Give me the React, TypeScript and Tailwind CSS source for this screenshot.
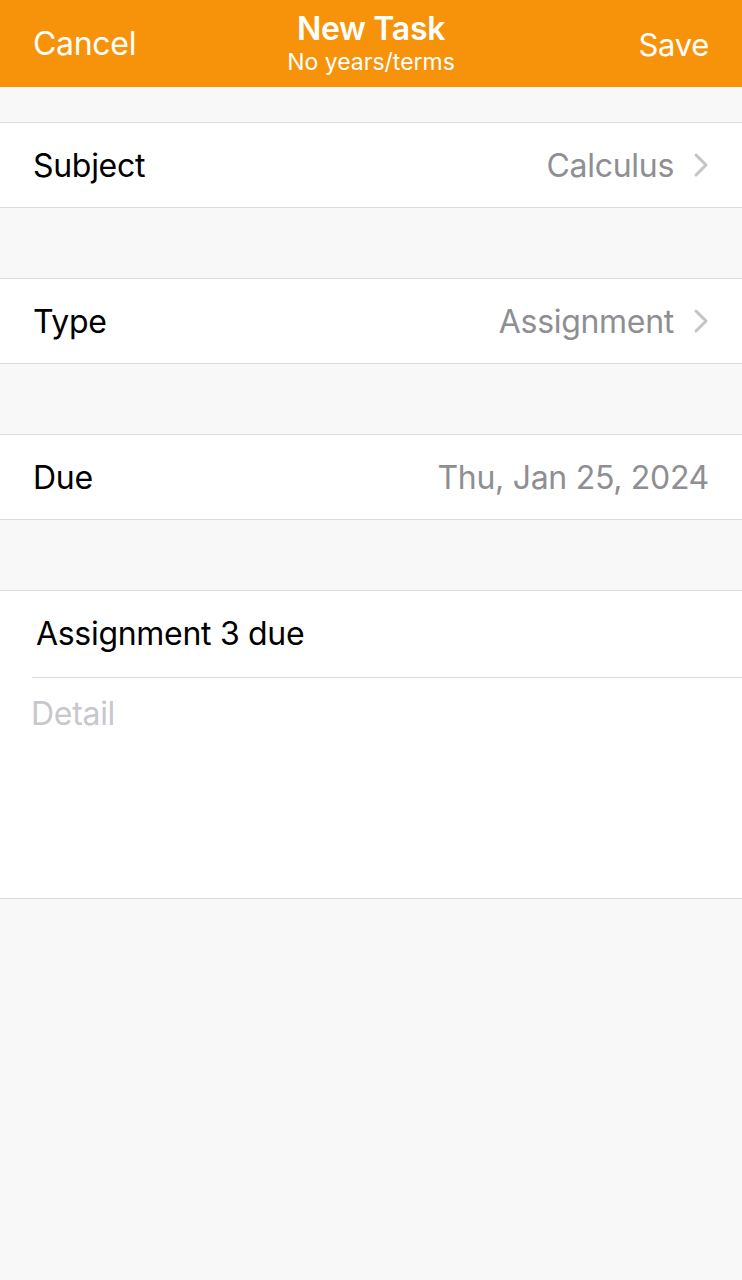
const ROWS = [
  { label: "Subject", value: "Calculus", chevron: true },
  { label: "Type", value: "Assignment", chevron: true },
  { label: "Due", value: "Thu, Jan 25, 2024", chevron: false },
];

function Chevron() {
  return (
    <svg width="16" height="26" viewBox="0 0 16 26" fill="none" className="shrink-0">
      <path d="M3 3 L13 13 L3 23" stroke="#c4c4c7" strokeWidth="3" strokeLinecap="round" strokeLinejoin="round" />
    </svg>
  );
}

export default function App() {
  return (
    <div className="min-h-[1280px] bg-[#f8f8f8] font-['Inter','Liberation_Sans',sans-serif]">
      {/* Nav bar */}
      <div className="h-[87px] bg-[#f7930a] grid grid-cols-[1fr_auto_1fr] items-center px-[33px] text-white">
        <button className="justify-self-start text-[32px] leading-none tracking-[-0.3px] mt-[1px]">Cancel</button>
        <div className="flex flex-col items-center -mt-[3px]">
          <span className="text-[32px] font-semibold leading-[36px] tracking-[-0.3px]">New Task</span>
          <span className="text-[23px] leading-[24px] mt-[3px]">No years/terms</span>
        </div>
        <button className="justify-self-end text-[31px] leading-none tracking-[-0.3px] mt-[1px]">Save</button>
      </div>

      <div className="h-[35px]" />

      {ROWS.map((row) => (
        <div key={row.label}>
          <div className="h-[86px] bg-white border-y border-[#dcdcdf] flex items-center justify-between pl-[33px] pr-[33px]">
            <span className="text-[32px] text-black tracking-[-0.3px] mt-[1px]">{row.label}</span>
            <div className="flex items-center gap-[19px]">
              <span className="text-[32px] text-[#8e8e93] tracking-[-0.3px] mt-[1px]">{row.value}</span>
              {row.chevron && <Chevron />}
            </div>
          </div>
          <div className="h-[70px]" />
        </div>
      ))}

      {/* Title + detail */}
      <div className="bg-white border-y border-[#dcdcdf]">
        <div className="h-[86px] flex items-center pl-[36px]">
          <span className="text-[32px] text-black tracking-[-0.3px]">Assignment 3 due</span>
        </div>
        <div className="ml-[32px] border-t border-[#dcdcdf]" />
        <div className="h-[220px] pl-[31px] pt-[12px]">
          <span className="text-[32px] text-[#c7c7cd] tracking-[-0.3px]">Detail</span>
        </div>
      </div>
    </div>
  );
}
